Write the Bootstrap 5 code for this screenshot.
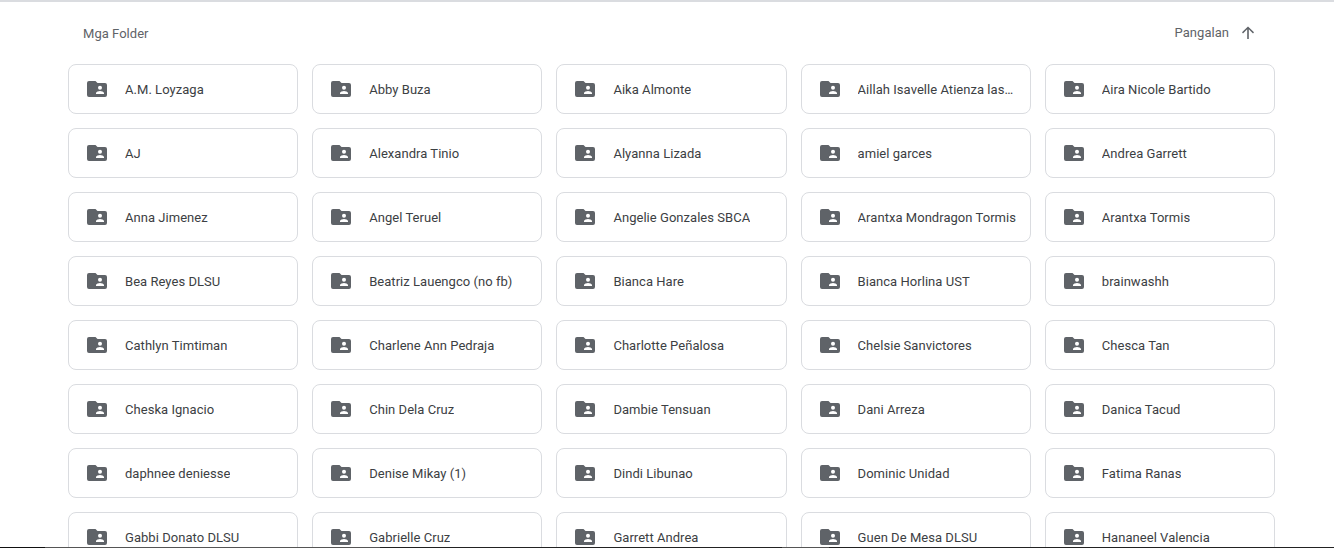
<!DOCTYPE html>
<html lang="tl">
<head>
<meta charset="utf-8">
<title>Mga Folder</title>
<link href="https://cdn.jsdelivr.net/npm/bootstrap@5.3.0/dist/css/bootstrap.min.css" rel="stylesheet">
<style>
html, body { height: 548px; overflow: hidden; background: #fff; }
body { font-family: Roboto, "Liberation Sans", sans-serif; color: #3c4043; position: relative; }
.top-rule { height: 2px; background: #dadce0; }
.drive-wrap { padding: 0 59px 0 68px; }
.head-row { height: 62px; color: #5f6368; font-size: 13px; letter-spacing: .03px; padding: 0 19px 0 15px; }
.head-title { position: relative; top: 1px; }
.head-sort { gap: 11px; }
.folder-grid { display: grid; grid-template-columns: repeat(5, 1fr); gap: 14px; }
.folder-tile { height: 50px; min-width: 0; border: 1px solid #dadce0; border-radius: 8px; padding: 2px 13px 0 18px; gap: 18px; font-size: 13px; letter-spacing: .04px; color: #3c4043; }
.folder-tile svg { flex: none; width: 20px; height: 20px; fill: #5f6368; margin-top: -2px; }
.folder-name { white-space: nowrap; overflow: hidden; text-overflow: ellipsis; min-width: 0; }
.bottom-rule { position: absolute; left: 0; right: 0; bottom: 0; height: 1px; background: linear-gradient(90deg, #111 0 45px, #555 45px 380px, #222 380px 782px, #555 782px 829px, #222 829px); }
</style>
</head>
<body>
<div class="top-rule"></div>
<main class="drive-wrap">
  <div class="head-row d-flex align-items-center justify-content-between">
    <span class="head-title">Mga Folder</span>
    <span class="head-sort d-flex align-items-center">Pangalan
      <svg width="16" height="16" viewBox="0 0 16 16" aria-hidden="true"><path fill="#5f6368" d="M7.200 14V4.300L3 8.400 2 7.300 8 1.400l6 5.900-1 1.100-4.200-4.100V14z"/></svg>
    </span>
  </div>
  <div class="folder-grid" id="grid"></div>
</main>
<div class="bottom-rule"></div>
<script>
var names = ["A.M. Loyzaga","Abby Buza","Aika Almonte","Aillah Isavelle Atienza lasallian","Aira Nicole Bartido","AJ","Alexandra Tinio","Alyanna Lizada","amiel garces","Andrea Garrett","Anna Jimenez","Angel Teruel","Angelie Gonzales SBCA","Arantxa Mondragon Tormis","Arantxa Tormis","Bea Reyes DLSU","Beatriz Lauengco (no fb)","Bianca Hare","Bianca Horlina UST","brainwashh","Cathlyn Timtiman","Charlene Ann Pedraja","Charlotte Peñalosa","Chelsie Sanvictores","Chesca Tan","Cheska Ignacio","Chin Dela Cruz","Dambie Tensuan","Dani Arreza","Danica Tacud","daphnee deniesse","Denise Mikay (1)","Dindi Libunao","Dominic Unidad","Fatima Ranas","Gabbi Donato DLSU","Gabrielle Cruz","Garrett Andrea","Guen De Mesa DLSU","Hananeel Valencia"];
var icon = '<svg viewBox="0 0 20 20" aria-hidden="true"><path fill-rule="evenodd" d="M2 2h6.500l2 2H18a2 2 0 0 1 2 2v10a2 2 0 0 1-2 2H2a2 2 0 0 1-2-2V4a2 2 0 0 1 2-2zm11 4.800a2 2 0 1 0 0 4 2 2 0 0 0 0-4zM9 15h8v-1c0-1.400-2.700-2.100-4-2.100S9 12.600 9 14z"/></svg>';
document.getElementById('grid').innerHTML = names.map(function (n) {
  return '<div class="folder-tile d-flex align-items-center bg-white">' + icon + '<span class="folder-name">' + n + '</span></div>';
}).join('');
</script>
<script src="https://cdn.jsdelivr.net/npm/bootstrap@5.3.0/dist/js/bootstrap.bundle.min.js"></script>
</body>
</html>
